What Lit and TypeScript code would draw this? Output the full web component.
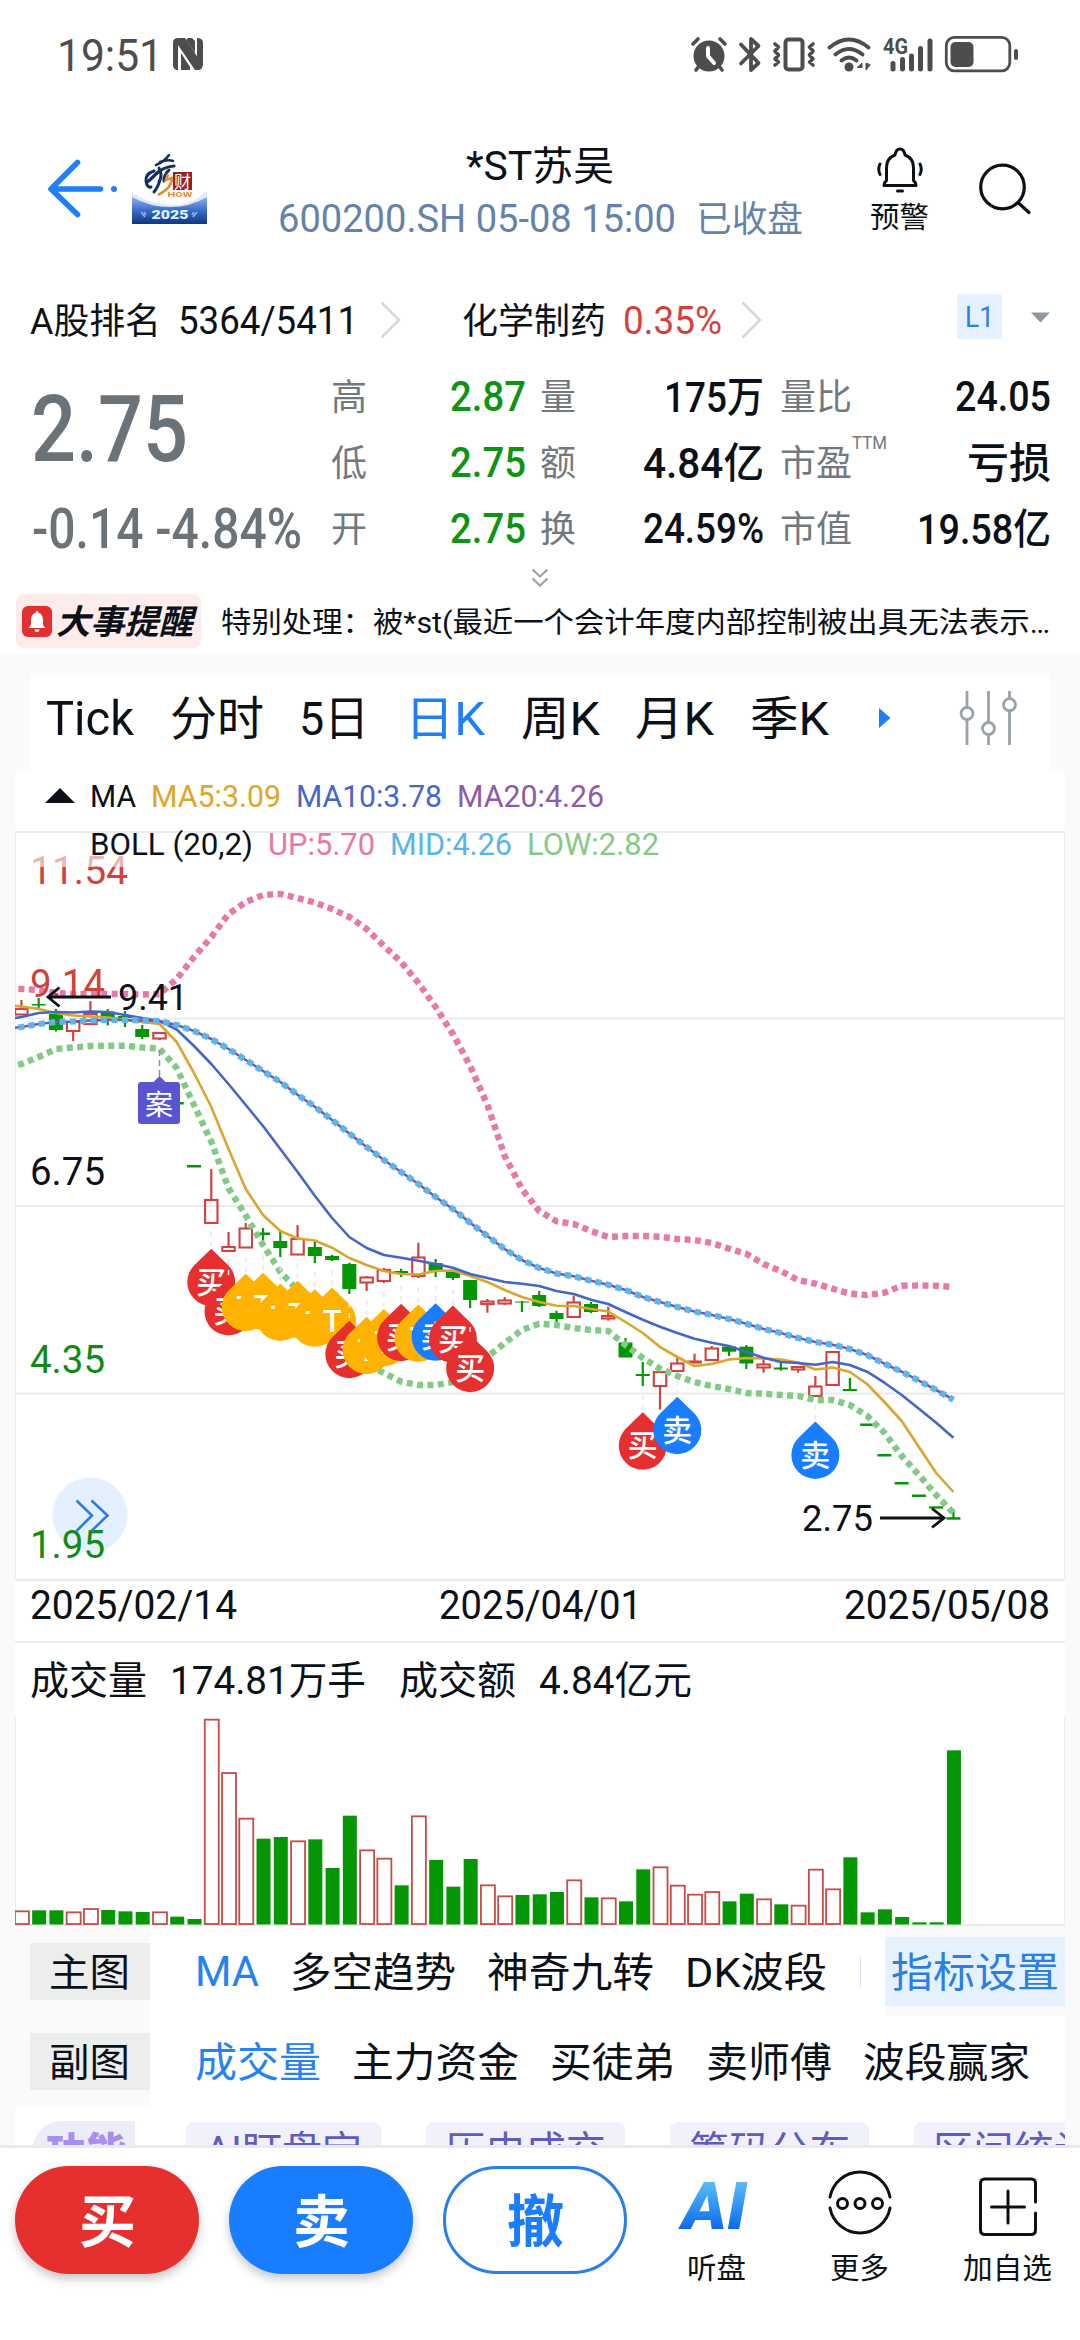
import { LitElement, html, svg, css } from "lit";
import { customElement } from "lit/decorators.js";

const shared = css`
  :host {
    display: block;
    font-family: Roboto, "Noto Sans CJK SC", sans-serif;
    color: #0c1118;
  }
  * {
    box-sizing: border-box;
  }
  svg {
    display: block;
    flex: none;
  }
  .fit {
    overflow: visible;
    fill: currentColor;
  }
  .row {
    display: flex;
    align-items: center;
  }
  .medium {
    font-weight: 500;
  }
  .bold {
    font-weight: 700;
  }
`;

/** One line of text set to an exact advance width. */
const fit = (text: string, width: number, size: number, cls = "") => {
  const baseline = size * (/[\u4e00-\u9fff]/.test(text) ? 0.88 : 0.86);
  return html`
    <svg class="fit ${cls}" width=${width} height=${size}>
      <text y=${baseline} font-size=${size} textLength=${width} lengthAdjust="spacingAndGlyphs">${text}</text>
    </svg>
  `;
};

@customElement("status-bar")
export class StatusBar extends LitElement {
  static styles = [
    shared,
    css`
      .bar {
        height: 108px;
        padding: 0 60px 0 57px;
        justify-content: space-between;
        color: #4d4d4d;
      }
      .left {
        gap: 9px;
      }
    `,
  ];
  render() {
    return html`
      <div class="row bar">
        <div class="row left">
          ${fit("19:51", 106, 45)}
          <svg width="32" height="34" viewBox="0 0 32 34">
            <path d="M6 1h7L30 27v3q0 3-4 3h-3L6 8v25Q1 33 1 28V6Q1 1 6 1z" fill="#4d4d4d" />
            <path d="M9 16l9 14v3H9zM16 1h4l3 3v12L14 3z" fill="#4d4d4d" />
            <path d="M25 1q6 0 6 5v22q0 2-2 3l-4-6z" fill="#4d4d4d" />
          </svg>
        </div>
        <svg width="330" height="40" viewBox="690 33 330 40" fill="none" stroke="#4d4d4d" stroke-linecap="round">
          <circle cx="709" cy="55" r="15.5" fill="#4d4d4d" stroke="none" />
          <path d="M708 47v8l6 7" stroke="#fff" stroke-width="4" />
          <path d="M693 43l5-5M725 43l-5-5M696 69l3-4M722 69l-3-4" stroke-width="3.6" />
          <path d="M741 43.500l17.500 18.500-7.500 7V38l7.500 7L741 62.500" stroke-width="3.800" stroke-linejoin="round" />
          <rect x="785.500" y="38.500" width="17" height="30" rx="3" stroke-width="4" />
          <path d="M775 43l3.500 3-3.500 4 3.500 4-3.500 4 3.500 3-3.500 3M813 43l-3.500 3 3.500 4-3.500 4 3.500 4-3.500 3 3.500 3" stroke-width="3.600" stroke-linejoin="round" />
          <path d="M829.500 46.500q19.500-16 39 0M835.500 53.500q13-11 27 0M841.500 59.500q7.500-6 15 0" stroke-width="3.800" />
          <circle cx="849" cy="66" r="4.500" fill="#4d4d4d" stroke="none" />
          <path d="M857.500 66.500h4.500v-4zM866 62.500v6.500l4-5z" stroke-width="1" fill="#4d4d4d" />
          <text x="883" y="53" font-size="22" font-weight="700" textLength="25" lengthAdjust="spacingAndGlyphs" fill="#4d4d4d" stroke="none">4G</text>
          <path d="M893 62.500V68M902.500 58.500V68M911.500 55V68M920.500 47.500V68M930 40V68" stroke-width="5" />
          <rect x="946.300" y="36.300" width="63.500" height="33.500" rx="8" stroke-width="2.800" />
          <rect x="950.500" y="41" width="23" height="25" rx="5" fill="#4d4d4d" stroke="none" />
          <path d="M1016 50v7" stroke-width="4" />
        </svg>
      </div>
    `;
  }
}

@customElement("stock-header")
export class StockHeader extends LitElement {
  static styles = [
    shared,
    css`
      .head {
        display: grid;
        grid-template-columns: 277px 526px 277px;
        height: 162px;
        align-items: center;
      }
      .left {
        padding-left: 44px;
        gap: 12px;
      }
      .title {
        display: flex;
        flex-direction: column;
        align-items: center;
        gap: 14px;
        padding-top: 4px;
      }
      .sub {
        color: #6482aa;
        gap: 20px;
      }
      .right {
        padding-left: 67px;
        gap: 49px;
      }
      .alarm {
        display: flex;
        flex-direction: column;
        align-items: center;
        gap: 9px;
        padding-bottom: 2px;
      }
    `,
  ];
  render() {
    return html`
      <div class="head">
        <div class="row left">
          <svg width="76" height="60" viewBox="44 159 76 60" fill="none" stroke="#1f80f6" stroke-width="5.600" stroke-linecap="round" stroke-linejoin="round">
            <path d="M77.500 162.500L51 189l26.500 25.500M51 189h49.500" />
            <circle cx="114" cy="189" r="3" fill="#1f80f6" stroke="none" />
          </svg>
          <svg width="75" height="70" viewBox="0 0 75 70">
            <defs>
              <linearGradient id="band" x1="0" y1="0" x2="0" y2="1">
                <stop offset="0" stop-color="#8fb2f0" />
                <stop offset=".5" stop-color="#3a6cc6" />
                <stop offset="1" stop-color="#0f3580" />
              </linearGradient>
            </defs>
            <path d="M0 39q20 12 40 12T75 37v33H0z" fill="#dfe9fb" />
            <path d="M0 43q18 10 38 10t37-10v27H0z" fill="url(#band)" />
            <g fill="none" stroke="#14305f" stroke-linecap="round">
              <path d="M37 1Q32 8 24 11M28 8q8-3 13-1" stroke-width="2.500" />
              <path d="M42 12Q31 13 24 20T15 28" stroke-width="3.200" />
              <path d="M27 14q4 7 0 14M22 17q-9 3-8 10t5 6M37 16q-6 6-5 11M29 22q-2 10-7 16" stroke-width="3" />
            </g>
            <path d="M36 20l-2 6 6-2q0 10-14 17" fill="none" stroke="#e98b36" stroke-width="2.600" />
            <rect x="41" y="18" width="19" height="18" fill="#9a1f20" />
            <text x="42" y="33.500" font-size="17" fill="#fff">财</text>
            <text x="35.500" y="43" font-size="6.500" font-weight="700" textLength="25" lengthAdjust="spacingAndGlyphs" fill="#ec8a35">HOW</text>
            <text x="19.500" y="65" font-size="13.500" font-weight="900" textLength="37" lengthAdjust="spacingAndGlyphs" fill="#d8f3ff">2025</text>
            <path d="M9 58l4 5M12 58l2 3M65 58l-4 5M62 58l-2 3" stroke="#8fb6ea" stroke-width="1.600" />
          </svg>
        </div>
        <div class="title">
          ${fit("*ST苏吴", 148, 40)}
          <div class="row sub">${fit("600200.SH 05-08 15:00", 398, 38)}${fit("已收盘", 107, 36)}</div>
        </div>
        <div class="row right">
          <div class="alarm">
            <svg width="48" height="47" viewBox="877 143 48 47" fill="none" stroke="#0c1118" stroke-width="3" stroke-linecap="round" stroke-linejoin="round">
              <path d="M885 182.500q0-3 2.500-5V165q0-10 8.500-13 1-6 5-6t5 6q8.500 3 8.500 13v12.500q2.500 2 2.500 5zM898.500 188h5M881 161q-2.500 5 0 10.500M921 161q2.500 5 0 10.500" />
            </svg>
            ${fit("预警", 59, 29)}
          </div>
          <svg width="54" height="54" viewBox="979 163 54 54" fill="none" stroke="#0c1118" stroke-width="3.200" stroke-linecap="round">
            <circle cx="1003.500" cy="188" r="21.800" />
            <path d="M1019.500 204l10.500 9.500" />
          </svg>
        </div>
      </div>
    `;
  }
}

interface Cell {
  label: string;
  labelW: number;
  value: string;
  valueW: number;
  sup?: string;
}

const COLUMNS: { cls: string; cells: Cell[] }[] = [
  {
    cls: "c1",
    cells: [
      { label: "高", labelW: 36, value: "2.87", valueW: 76 },
      { label: "低", labelW: 36, value: "2.75", valueW: 76 },
      { label: "开", labelW: 36, value: "2.75", valueW: 76 },
    ],
  },
  {
    cls: "c2",
    cells: [
      { label: "量", labelW: 36, value: "175万", valueW: 100 },
      { label: "额", labelW: 36, value: "4.84亿", valueW: 121 },
      { label: "换", labelW: 36, value: "24.59%", valueW: 121 },
    ],
  },
  {
    cls: "c3",
    cells: [
      { label: "量比", labelW: 72, value: "24.05", valueW: 96 },
      { label: "市盈", labelW: 72, value: "亏损", valueW: 84, sup: "TTM" },
      { label: "市值", labelW: 72, value: "19.58亿", valueW: 134 },
    ],
  },
];

@customElement("quote-panel")
export class QuotePanel extends LitElement {
  static styles = [
    shared,
    css`
      .rank {
        height: 93px;
        padding: 6px 30px 0 30px;
      }
      .rank .val {
        margin-left: 17px;
      }
      .rank .arrow {
        margin-left: 22px;
      }
      .rank .sector {
        margin-left: 60px;
      }
      .rank .last-arrow {
        margin-left: 19px;
      }
      .red {
        color: #d2423c;
      }
      .level {
        margin-left: auto;
        width: 45px;
        height: 45px;
        border-radius: 3px;
        background: #e5f1fe;
        color: #2b7de9;
        justify-content: center;
        margin-bottom: 6px;
      }
      .drop {
        margin-left: 29px;
        margin-bottom: 4px;
      }
      .quote {
        display: flex;
        height: 198px;
        padding: 0 29px 0 31px;
      }
      .price {
        width: 300px;
        color: #6b7379;
      }
      .last {
        height: 132px;
        padding-bottom: 3px;
      }
      .change {
        height: 66px;
        padding-left: 1px;
      }
      .cell {
        height: 66px;
        justify-content: space-between;
      }
      .lab {
        display: flex;
        align-items: center;
        height: 66px;
        color: #72797e;
      }
      .sup {
        align-self: flex-start;
        margin: 5px 0 0 0;
      }
      .c1 {
        width: 195px;
      }
      .c1 .num {
        color: #0f9313;
      }
      .c2 {
        width: 224px;
        margin-left: 14px;
      }
      .c3 {
        width: 271px;
        margin-left: 16px;
      }
      .more {
        height: 32px;
        display: flex;
        justify-content: center;
        align-items: center;
      }
      .alert {
        height: 61px;
        padding: 0 30px 5px 16px;
        gap: 20px;
      }
      .badge {
        width: 186px;
        height: 54px;
        border-radius: 8px;
        background: #fdecec;
        padding-left: 6px;
        gap: 4px;
      }
      .slant {
        font-style: italic;
        font-weight: 700;
      }
    `,
  ];
  render() {
    const arrow = (cls: string) => html`<svg class=${cls} width="22" height="38" fill="none" stroke="#d5d9de" stroke-width="2.600">
      <path d="M1.500 1.500L19 19 1.500 36.500" />
    </svg>`;
    return html`
      <div class="row rank">
        ${fit("A股排名", 131, 36)} ${fit("5364/5411", 180, 38, "val")} ${arrow("arrow")}
        ${fit("化学制药", 144, 36, "sector")} ${fit("0.35%", 99, 38, "val red")} ${arrow("last-arrow")}
        <div class="row level">${fit("L1", 29, 29)}</div>
        <svg class="drop" width="19" height="11"><path d="M0 .5h19l-9.500 10z" fill="#8d98a3" /></svg>
      </div>
      <div class="quote">
        <div class="price">
          <div class="row last">${fit("2.75", 157, 93, "medium")}</div>
          <div class="row change">${fit("-0.14 -4.84%", 270, 55, "medium")}</div>
        </div>
        ${COLUMNS.map(
          (col) => html`<div class=${col.cls}>
            ${col.cells.map(
              (c) => html`<div class="row cell">
                <div class="lab">${fit(c.label, c.labelW, 36)}${c.sup ? fit(c.sup, 35, 18, "sup") : ""}</div>
                ${fit(c.value, c.valueW, 42, "num medium")}
              </div>`,
            )}
          </div>`,
        )}
      </div>
      <div class="more">
        <svg width="18" height="19" fill="none" stroke="#9ba3ad" stroke-width="2.200">
          <path d="M1.500 1.500L9 8.500l7.500-7M1.500 10.500L9 17.500l7.500-7" />
        </svg>
      </div>
      <div class="row alert">
        <div class="row badge">
          <svg width="30" height="31" viewBox="0 0 30 31">
            <rect width="30" height="31" rx="6" fill="#e23030" />
            <path d="M6.500 22q2.500-1.500 2.500-4v-4q0-6 4.500-7 0-2 1.500-2t1.500 2q4.500 1 4.500 7v4q0 2.500 2.500 4zM12.500 23.500h5q-.5 2.500-2.500 2.500t-2.500-2.500z" fill="#fff" />
          </svg>
          ${fit("大事提醒", 137, 34, "slant")}
        </div>
        ${fit("特别处理：被*st(最近一个会计年度内部控制被出具无法表示…", 829, 29)}
      </div>
    `;
  }
}

@customElement("period-tabs")
export class PeriodTabs extends LitElement {
  static styles = [
    shared,
    css`
      :host {
        background: #fafafa;
        padding: 21px 30px 0;
      }
      .tabs {
        height: 96px;
        background: #fff;
        padding: 0 32px 11px 16px;
      }
      .list {
        width: 783px;
        justify-content: space-between;
      }
      .on {
        color: #1f80f5;
      }
      .next {
        margin-left: 50px;
      }
      .settings {
        margin-left: auto;
      }
    `,
  ];
  render() {
    const tabs: [string, number][] = [
      ["Tick", 88],
      ["分时", 94],
      ["5日", 70],
      ["日K", 80],
      ["周K", 79],
      ["月K", 79],
      ["季K", 79],
    ];
    return html`
      <div class="row tabs">
        <div class="row list">${tabs.map(([t, w]) => fit(t, w, t === "Tick" ? 49 : 47, t === "日K" ? "on" : ""))}</div>
        <svg class="next" width="12" height="22"><path d="M0 1l11.500 10L0 21z" fill="#1f80f5" /></svg>
        <svg class="settings" width="60" height="56" viewBox="957 689 60 56" fill="#fff" stroke="#9aa3ab" stroke-width="2.800">
          <path d="M966 690v54M987.500 690v54M1008.500 690v54" />
          <circle cx="966" cy="712.500" r="6" />
          <circle cx="987.500" cy="727.500" r="6" />
          <circle cx="1008.500" cy="703.700" r="6" />
        </svg>
      </div>
    `;
  }
}

const X0 = 21.4;
const STEP = 17.26;
const px = (i: number) => X0 + STEP * i;
const RED = "#cf4440";
const GREEN = "#059605";

/** rising?, wick top, body top, body bottom, wick bottom */
type Candle = [number, number, number, number, number];
const CANDLES: Candle[] = [
  [1, 1000, 1009, 1014.5, 1015], [0, 998, 1004, 1005.5, 1009], [0, 1009, 1014, 1030, 1031.5], [1, 1022, 1022, 1031, 1041],
  [1, 1001, 1014, 1024, 1024], [0, 1009, 1011.5, 1018, 1025.5], [0, 1011, 1016, 1018, 1027], [0, 1025, 1029, 1037, 1039],
  [1, 1032, 1033, 1038.5, 1040], [0, 1102, 1102, 1104.5, 1104], [0, 1165, 1165, 1167.5, 1167], [1, 1169, 1200, 1223, 1223],
  [1, 1232, 1247, 1251, 1251], [1, 1223, 1228.5, 1247.5, 1248], [0, 1228, 1232.5, 1235, 1246], [0, 1231, 1241, 1248, 1257],
  [1, 1225, 1239, 1254.5, 1254], [0, 1242, 1247, 1256, 1263], [0, 1255, 1256, 1260, 1261], [0, 1262.7, 1264, 1289, 1294],
  [1, 1276, 1277.5, 1282.5, 1291], [1, 1268, 1270, 1281, 1283], [0, 1268.7, 1271, 1273.5, 1277], [1, 1242.7, 1257.5, 1276, 1278],
  [0, 1259, 1263, 1270.7, 1277], [0, 1270.7, 1272, 1278, 1280], [0, 1280, 1280, 1300, 1308], [1, 1299, 1301.5, 1304, 1312.7],
  [1, 1297, 1300.5, 1303.5, 1305], [0, 1301, 1301.5, 1302.5, 1312], [0, 1291, 1295, 1306, 1307], [0, 1310.7, 1313, 1319, 1322],
  [1, 1295.7, 1302.5, 1317, 1317], [0, 1302, 1304, 1312, 1313], [1, 1306.7, 1316, 1318.5, 1320.7], [0, 1338, 1342.5, 1357.5, 1357],
  [0, 1362, 1374, 1376, 1386], [1, 1372, 1372, 1386, 1409.7], [1, 1358, 1363.5, 1371, 1371], [1, 1353.7, 1361.5, 1362.5, 1362],
  [1, 1346, 1348.5, 1360, 1361], [0, 1346, 1346.5, 1351.7, 1356], [0, 1345, 1346.7, 1363.5, 1369], [1, 1359, 1364.5, 1367.5, 1372.7],
  [0, 1363, 1367.5, 1369.5, 1370.7], [1, 1366, 1367, 1369.5, 1372.7], [1, 1376, 1386.5, 1396, 1396], [1, 1352, 1352, 1385, 1385],
  [0, 1378, 1389, 1391, 1390], [0, 1425, 1423.5, 1426, 1425], [0, 1455, 1454, 1456.5, 1455], [0, 1483, 1482, 1484.5, 1483],
  [0, 1495.7, 1494.5, 1497, 1496], [0, 1507, 1506.3, 1508.6, 1507], [0, 1509, 1517.2, 1519.7, 1518],
];

const MA5 = [
  1006.5, 1009, 1013, 1015.5, 1016.5, 1017.5, 1020, 1022, 1024, 1042, 1073, 1107, 1149, 1189, 1215, 1231, 1238.5, 1240.5, 1247.7, 1258,
  1265, 1271, 1274, 1274.5, 1271, 1270.5, 1276, 1282, 1290, 1297, 1302, 1305.7, 1306, 1309, 1311.5, 1322, 1333, 1347, 1357, 1366,
  1364, 1359.5, 1358, 1358.5, 1359.5, 1362.5, 1369.5, 1367.5, 1372, 1384, 1402, 1421, 1447, 1473, 1492,
];
const MA10 = [
  1017, 1013, 1012, 1012.5, 1011.5, 1012, 1015, 1018, 1021, 1029.5, 1046, 1064, 1084, 1105, 1126, 1149, 1172, 1195.7, 1218, 1237,
  1248, 1255, 1257.7, 1260.7, 1264, 1267.7, 1274, 1278, 1282, 1283.7, 1286, 1291, 1294, 1299.7, 1304, 1312, 1319.7, 1326.7, 1333,
  1338.7, 1342.7, 1346, 1352, 1357.7, 1362, 1363, 1364.7, 1362, 1365, 1371.7, 1382.7, 1395, 1408.7, 1422.7, 1437.7,
];
const MID = [
  1027, 1024, 1022, 1021.5, 1020.5, 1020, 1020, 1020.5, 1021, 1025, 1031, 1039, 1049, 1060, 1071, 1082, 1094.7, 1106.7, 1120, 1133.5,
  1147, 1160, 1172, 1184, 1197, 1209, 1222.7, 1236, 1249, 1260, 1268, 1273.5, 1276.3, 1280.7, 1284.7, 1290, 1297, 1302, 1307, 1311.5,
  1315, 1319, 1323.7, 1329, 1333, 1338, 1342, 1344.7, 1349, 1355, 1363.7, 1371.7, 1380.7, 1390, 1399.7,
];
const UP = [
  989, 990, 993, 994, 994, 994, 994, 994.5, 994, 979, 957, 937, 914, 902, 895, 894, 898, 902.5, 909, 917, 929, 946, 962, 983, 1007,
  1034, 1066, 1105, 1156, 1189, 1211, 1221.3, 1224, 1231, 1237, 1236, 1236, 1236.7, 1239, 1240, 1243, 1248.7, 1253.7, 1264, 1271,
  1280, 1283.7, 1288.7, 1293.7, 1295, 1292.7, 1285.7, 1285.5, 1285.7, 1287,
];
const LOW = [
  1064, 1057, 1049, 1047.5, 1046, 1045.7, 1045.7, 1047.5, 1048.5, 1068, 1105, 1141.7, 1188, 1215.7, 1245, 1271.7, 1290, 1312, 1334,
  1352, 1365, 1373, 1381.7, 1385, 1385, 1382, 1372, 1357, 1343, 1330, 1323.7, 1325, 1328, 1330, 1331, 1345, 1358, 1368.7, 1376, 1382,
  1386, 1389, 1393, 1393.7, 1395, 1396, 1400, 1400, 1405, 1415.7, 1432.7, 1456, 1475, 1495, 1513,
];

const PIN_COLORS: Record<string, string> = { 买: "#e63030", 卖: "#187dff", T: "#ffb300" };
const PINS: [number, string, number][] = [
  [11, "买", 1248.7], [12, "买", 1278], [13, "T", 1273.7], [14, "T", 1272.7], [15, "T", 1283.5], [16, "T", 1280.7],
  [17, "T", 1289.3], [18, "T", 1287.5], [19, "买", 1320.7], [20, "T", 1316.7], [21, "T", 1309], [22, "买", 1303.7],
  [23, "T", 1304.5], [24, "卖", 1303.3], [25, "买", 1305.5], [26, "买", 1334.7], [36, "买", 1412.3], [38, "卖", 1396.7],
  [46, "卖", 1421.5],
];

const VOLUME_TOPS = [
  844, 841, 841, 847, 837, 840, 844, 846, 847, 860, 867, 269, 429, 566, 626, 621, 634, 628, 714, 557, 661, 686, 766, 559, 690, 770, 687,
  766, 799, 795, 793, 786, 751, 802, 805, 814, 718, 712, 767, 794, 786, 814, 791, 808, 823, 827, 719, 778, 682, 847, 838, 861, 877,
  877, 361,
].map((v) => 1630 + v / 3);

const line = (ys: number[]) =>
  `M8 ${ys[0] + (ys[0] - ys[1]) * 0.5} ` + ys.map((y, i) => `L${px(i).toFixed(1)} ${y}`).join(" ");

@customElement("kline-chart")
export class KlineChart extends LitElement {
  static styles = [
    shared,
    css`
      :host {
        background: #fafafa;
        padding: 0 15px;
      }
      .panel {
        background: #fff;
        position: relative;
      }
      .legend {
        height: 60px;
        padding: 0 0 12px 30px;
        gap: 15px;
      }
      .boll {
        position: absolute;
        left: 75px;
        top: 57px;
        gap: 15px;
      }
      .gold { color: #dfa62b; }
      .blue { color: #4468ca; }
      .purple { color: #8f5aaa; }
      .pink { color: #e878a8; }
      .sky { color: #56b6ea; }
      .mint { color: #84cb87; }
      .dates {
        height: 60px;
        padding: 0 15px 12px;
        justify-content: space-between;
      }
      .volume {
        border-top: 2px solid #e9eaeb;
      }
      .totals {
        height: 72px;
        padding: 0 15px;
      }
      .totals .num {
        margin-left: 23px;
      }
      .totals .second {
        margin-left: 33px;
      }
    `,
  ];

  private candle([rising, hi, top, bottom, lo]: Candle, i: number) {
    const x = px(i);
    if (!rising) {
      return svg`<path d="M${x} ${hi}V${lo}" stroke=${GREEN} stroke-width="2.200" />
        <rect x=${x - 7} y=${top} width="14" height=${bottom - top} fill=${GREEN} />`;
    }
    return svg`<path d="M${x} ${hi}V${top}M${x} ${bottom}V${lo}" stroke=${RED} stroke-width="2.200" />
      <rect x=${x - 6.2} y=${top} width="12.4" height=${bottom - top} fill="none" stroke=${RED} stroke-width="2.100" />`;
  }

  private pin([i, label, tip]: [number, string, number]) {
    const x = px(i);
    return svg`<path d="M${x} ${CANDLES[i][4] + 9}V${tip}" stroke="#e6e7ec" stroke-width="1.500" stroke-dasharray="5 5" />
      <path transform="translate(${x} ${tip})" d="M0 0L17 16.500A24 24 0 1 1 -17 16.500Z" fill=${PIN_COLORS[label]} />
      <text x=${x} y=${tip + 44} font-size=${label === "T" ? 31 : 30} font-weight="500" text-anchor="middle" fill="#fff">${label}</text>`;
  }

  private label(text: string, y: number, fill: string, width = 75) {
    return svg`<text x="30" y=${y} font-size="39" textLength=${width} lengthAdjust="spacingAndGlyphs" fill=${fill}>${text}</text>`;
  }

  render() {
    return html`
      <div class="panel">
        <div class="row legend">
          <svg width="30" height="15"><path d="M0 15L15 0l15 15z" fill="#0c1118" /></svg>
          ${fit("MA", 46, 31)} ${fit("MA5:3.09", 130, 31, "gold")} ${fit("MA10:3.78", 146, 31, "blue")}
          ${fit("MA20:4.26", 147, 31, "purple")}
        </div>
        <svg width="1050" height="750" viewBox="15 831 1050 750">
          <path d="M15 832H1065M15 1018.500H1065M15 1206H1065M15 1393.500H1065M15 1580H1065" stroke="#eaebec" stroke-width="2" />
          <path d="M15.500 831V1581M1064.500 831V1581" stroke="#eeeeef" />
          <circle cx="90" cy="1515" r="37.500" fill="#e4f0fd" />
          ${this.label("11.54", 884, "#d0423c", 98)} ${this.label("6.75", 1185, "#0c1118")}
          ${this.label("4.35", 1373, "#128a16")} ${this.label("1.95", 1558, "#128a16")}
          <path d="M76.500 1500.500L92 1515.500 76.500 1531M91.500 1500.500L107.500 1515.500 91.500 1531" fill="none" stroke="#2c7fe2" stroke-width="2.600" />
          <rect x="16" y="833" width="1048" height="34" fill="#fff" opacity=".6" />
          ${CANDLES.map((c, i) => this.candle(c, i))}
          <g fill="none" stroke-linejoin="round">
            <path d=${line(MA5)} stroke="#dba52e" stroke-width="2.600" />
            <path d=${line(MA10)} stroke="#4367c6" stroke-width="2.600" />
            <path d=${line(MID)} stroke="#7f56a6" stroke-width="2.600" />
            <path d=${line(MID)} stroke="#59b7ec" stroke-width="6.200" stroke-dasharray="6 4.400" />
            <path d=${line(UP)} stroke="#e878a8" stroke-width="6.400" stroke-dasharray="6 4.400" />
            <path d=${line(LOW)} stroke="#82ca85" stroke-width="6.400" stroke-dasharray="6 4.400" />
          </g>
          ${this.label("9.14", 997, "#d0423c")}
          <path d="M111 997H48M59.500 987.500L48 997l11.500 9.500" fill="none" stroke="#0c1118" stroke-width="2.800" />
          <text x="118" y="1010" font-size="37" textLength="70" lengthAdjust="spacingAndGlyphs" fill="#0c1118">9.41</text>
          <path d="M159.500 1050V1076" stroke="#8c88d4" stroke-width="1.500" stroke-dasharray="6 4" />
          <path d="M159.500 1076l6 6H177q3 0 3 3v36q0 3-3 3h-36q-3 0-3-3v-36q0-3 3-3h12.500z" fill="#5955d0" />
          <text x="159" y="1114.500" font-size="28" text-anchor="middle" fill="#fff">案</text>
          ${PINS.map((p) => this.pin(p))}
          <text x="802" y="1531" font-size="37" textLength="71" lengthAdjust="spacingAndGlyphs" fill="#0c1118">2.75</text>
          <path d="M880 1518H944M932 1508.500L944 1518l-12 9.500" fill="none" stroke="#0c1118" stroke-width="2.800" />
        </svg>
        <div class="row boll">
          ${fit("BOLL (20,2)", 163, 31)} ${fit("UP:5.70", 107, 31, "pink")} ${fit("MID:4.26", 122, 31, "sky")}
          ${fit("LOW:2.82", 132, 31, "mint")}
        </div>
        <div class="row dates">
          ${fit("2025/02/14", 207, 40)} ${fit("2025/04/01", 203, 40)} ${fit("2025/05/08", 206, 40)}
        </div>
        <div class="volume">
          <div class="row totals">
            ${fit("成交量", 117, 39)} ${fit("174.81万手", 196, 39, "num")} ${fit("成交额", 117, 39, "second")}
            ${fit("4.84亿元", 153, 39, "num")}
          </div>
          <svg width="1050" height="211" viewBox="15 1715 1050 211">
            <path d="M15 1925H1065" stroke="#eaebec" stroke-width="2" />
            <path d="M15.500 1715V1926M1064.500 1715V1926" stroke="#eeeeef" />
            ${VOLUME_TOPS.map((y, i) =>
              CANDLES[i][0]
                ? svg`<rect x=${px(i) - 6.5} y=${y} width="14" height=${1924 - y} fill="#fff" stroke="#c94b48" stroke-width="1.800" />`
                : svg`<rect x=${px(i) - 6.5} y=${y} width="14" height=${1924.5 - y} fill="#059605" />`,
            )}
          </svg>
        </div>
      </div>
    `;
  }
}

@customElement("indicator-rows")
export class IndicatorRows extends LitElement {
  static styles = [
    shared,
    css`
      :host {
        background: #fafafa;
      }
      .line {
        display: flex;
        height: 90px;
        padding: 0 15px 0 30px;
        align-items: center;
      }
      .kind {
        width: 120px;
        height: 57px;
        background: #eceded;
        padding-left: 19px;
        flex: none;
      }
      .options {
        flex: 1;
        height: 90px;
        background: #fff;
        padding-left: 45px;
        gap: 31px;
      }
      .on {
        color: #2482f3;
      }
      .bar {
        width: 1px;
        height: 31px;
        margin-left: 2px;
        background: #d5e2ee;
      }
      .config {
        width: 180px;
        height: 69px;
        background: #e5f1fe;
        color: #2b7fe4;
        justify-content: center;
        flex: none;
      }
      .tools {
        display: flex;
        height: 39px;
        margin: 0 15px;
        padding-top: 16px;
        background: #fff;
        overflow: hidden;
      }
      .tag {
        width: 102px;
        height: 60px;
        margin: -1px 0 0 18px;
        padding: 10px 0 0 13px;
        background: #ededfa;
        border-top-left-radius: 28px;
        color: #a68ff0;
        flex: none;
      }
      .heavy {
        font-weight: 900;
      }
      .chips {
        display: flex;
        gap: 45px;
        margin-left: 51px;
      }
      .chip {
        height: 60px;
        padding: 8px 19px 0 19px;
        border-radius: 8px;
        background: #f1f1fc;
        color: #5f5bc0;
        flex: none;
      }
    `,
  ];
  render() {
    return html`
      <div class="line">
        <div class="row kind">${fit("主图", 81, 39)}</div>
        <div class="row options">
          ${fit("MA", 64, 42, "on")} ${fit("多空趋势", 166, 41)} ${fit("神奇九转", 167, 41)} ${fit("DK波段", 142, 41)}
          <div class="bar"></div>
        </div>
        <div class="row config">${fit("指标设置", 168, 41)}</div>
      </div>
      <div class="line">
        <div class="row kind">${fit("副图", 81, 39)}</div>
        <div class="row options">
          ${fit("成交量", 126, 41, "on")} ${fit("主力资金", 167, 41)} ${fit("买徒弟", 125, 41)} ${fit("卖师傅", 126, 41)}
          ${fit("波段赢家", 167, 41)}
        </div>
      </div>
      <div class="tools">
        <div class="tag">${fit("功能", 80, 40, "heavy")}</div>
        <div class="chips">
          ${["AI盯盘宝", "历史成交", "筹码分布", "区间统计"].map(
            (t, i) => html`<div class="chip">${fit(t, [157, 161, 161, 161][i], 40)}</div>`,
          )}
        </div>
      </div>
    `;
  }
}

@customElement("trade-bar")
export class TradeBar extends LitElement {
  static styles = [
    shared,
    css`
      .wrap {
        display: flex;
        height: 195px;
        border-top: 3px solid #e9eaeb;
        background: #fff;
        padding: 18px 28px 0 15px;
      }
      .btns {
        display: flex;
        gap: 30px;
      }
      .btn {
        display: flex;
        width: 184px;
        height: 108px;
        border-radius: 54px;
        align-items: center;
        justify-content: center;
        color: #fff;
      }
      .buy {
        background: #e63030;
        box-shadow: 0 5px 10px rgba(60, 20, 20, 0.25);
      }
      .sell {
        background: #187dff;
        box-shadow: 0 5px 10px rgba(20, 30, 60, 0.25);
      }
      .cancel {
        border: 3px solid #2a7fe6;
        color: #1b7dfa;
      }
      .links {
        display: flex;
        flex: 1;
        justify-content: space-between;
        padding-left: 49px;
      }
      .link {
        display: flex;
        flex-direction: column;
        align-items: center;
        gap: 17px;
      }
    `,
  ];
  render() {
    return html`
      <div class="wrap">
        <div class="btns">
          <div class="btn buy">${fit("买", 57, 57, "bold")}</div>
          <div class="btn sell">${fit("卖", 57, 57, "bold")}</div>
          <div class="btn cancel">${fit("撤", 57, 57, "bold")}</div>
        </div>
        <div class="links">
          <div class="link">
            <svg width="80" height="70" viewBox="675 2166 80 70">
              <defs>
                <linearGradient id="ai" x1="0" y1="0" x2="0" y2="1">
                  <stop offset=".1" stop-color="#68c8fa" />
                  <stop offset=".8" stop-color="#0a6aec" />
                </linearGradient>
              </defs>
              <text x="681" y="2229" font-size="67" font-weight="900" font-style="italic" textLength="65" lengthAdjust="spacingAndGlyphs" fill="url(#ai)">AI</text>
            </svg>
            ${fit("听盘", 59, 29)}
          </div>
          <div class="link">
            <svg width="66" height="70" viewBox="826.500 2166 66 70" fill="none" stroke="#0c1118" stroke-width="3">
              <path d="M829.500 2197a30.500 30.500 0 0 1 60 0M829.500 2208a30.500 30.500 0 0 0 60 0" stroke-linecap="round" />
              <circle cx="842" cy="2203.500" r="5" />
              <circle cx="859.500" cy="2203.500" r="5" />
              <circle cx="877" cy="2203.500" r="5" />
            </svg>
            ${fit("更多", 59, 29)}
          </div>
          <div class="link">
            <svg width="62" height="70" viewBox="976.500 2166 62 70" fill="none" stroke="#0c1118" stroke-width="3" stroke-linecap="round">
              <path d="M1035 2202V2183.500q0-4.500-4.500-4.500H984.500q-4.500 0-4.500 4.500V2230q0 4.500 4.500 4.500H1030.500q4.500 0 4.500-4.500V2213M1007.500 2191V2223M991 2207H1024" />
            </svg>
            ${fit("加自选", 89, 29)}
          </div>
        </div>
      </div>
    `;
  }
}

@customElement("app-root")
export class AppRoot extends LitElement {
  static styles = css`
    :host {
      display: block;
      width: 1080px;
      height: 2340px;
      overflow: hidden;
      background: #fff;
    }
  `;
  render() {
    return html`
      <status-bar></status-bar>
      <stock-header></stock-header>
      <quote-panel></quote-panel>
      <period-tabs></period-tabs>
      <kline-chart></kline-chart>
      <indicator-rows></indicator-rows>
      <trade-bar></trade-bar>
    `;
  }
}
